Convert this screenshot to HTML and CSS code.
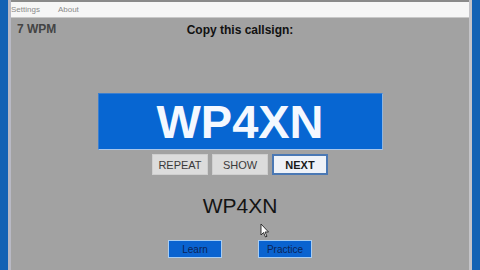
FILE: index.html
```html
<!DOCTYPE html>
<html lang="en">
<head>
  <meta charset="UTF-8" />
  <title>Callsign Trainer</title>
  <link rel="stylesheet" href="styles.css">
</head>
<body>
  <div class="frame">
    <div class="edge edge-left"></div>
    <div class="window">
      <div class="menubar">
        <span>Settings</span>
        <span>About</span>
      </div>
      <div class="content">
        <div class="topline">
          <div class="wpm">7 WPM</div>
          <div class="prompt">Copy this callsign:</div>
          <div></div>
        </div>
        <div class="callbox">WP4XN</div>
        <div class="controls">
          <button class="ctl">REPEAT</button>
          <button class="ctl">SHOW</button>
          <button class="ctl active">NEXT</button>
        </div>
        <div class="answer">WP4XN</div>
        <div class="modes">
          <button class="mode">Learn</button>
          <button class="mode">Practice</button>
        </div>
        <svg class="cursor" width="10" height="15" viewBox="0 0 10 15">
          <path d="M1 1 L1 12 L3.5 9.5 L5.5 14 L7 13.3 L5 9 L8.5 9 Z" fill="#fff" stroke="#222" stroke-width="0.9"/>
        </svg>
      </div>
    </div>
    <div class="edge edge-right"></div>
  </div>
</body>
</html>
```

FILE: styles.css
```css
body {
  margin: 0;
  font-family: 'Liberation Sans', Arial, sans-serif;
  background: #a2a2a2;
}
.frame {
  display: flex;
  width: 480px;
  height: 270px;
  overflow: hidden;
}
.edge {
  width: 8px;
  background: #1262b4;
}
.edge-left {
  border-right: 3px solid #b8b9c4;
}
.edge-right {
  border-left: 3px solid #c4c4c8;
}
.window {
  flex: 1;
  display: flex;
  flex-direction: column;
  border-top: 2px solid #8a8a8a;
}
.menubar {
  height: 15px;
  background: #f6f6f6;
  display: flex;
  gap: 18px;
  align-items: center;
  padding-left: 0;
  font-size: 8px;
  color: #8a8a8a;
  border-bottom: 1px solid #c8c8c8;
}
.content {
  position: relative;
  flex: 1;
  display: flex;
  flex-direction: column;
  align-items: center;
}
.topline {
  width: 100%;
  display: grid;
  grid-template-columns: 1fr auto 1fr;
  padding-top: 4px;
  font-weight: bold;
  font-size: 12px;
}
.wpm {
  padding-left: 6px;
  color: #444;
}
.prompt {
  padding-top: 1px;
  color: #111;
}
.callbox {
  margin-top: 56px;
  width: 283px;
  height: 55px;
  background: #0766d2;
  border: 1px solid #3c7fcf;
  border-right-color: #8fb5e0;
  border-bottom-color: #a8c6ea;
  color: #f4f8ff;
  font-size: 47px;
  font-weight: bold;
  line-height: 55px;
  text-align: center;
}
.controls {
  display: flex;
  gap: 4px;
  margin-top: 4px;
}
.ctl {
  width: 56px;
  height: 21px;
  padding: 0;
  font-family: 'Liberation Sans', Arial, sans-serif;
  font-size: 11px;
  color: #3a3a3a;
  background: #dcdcdc;
  border: 1px solid #cfcfcf;
}
.active {
  background: #eef2f8;
  border: 2px solid #4a78b4;
  font-weight: bold;
  color: #1a1a1a;
}
.answer {
  margin-top: 19px;
  font-size: 21px;
  color: #141414;
}
.modes {
  display: flex;
  gap: 36px;
  margin-top: 22px;
}
.mode {
  width: 54px;
  height: 18px;
  padding: 0;
  font-family: 'Liberation Sans', Arial, sans-serif;
  font-size: 10px;
  color: #0c2456;
  background: #0a63d0;
  border: 1px solid #a8cdf2;
}
.cursor {
  position: absolute;
  left: 249px;
  top: 205px;
}
```
